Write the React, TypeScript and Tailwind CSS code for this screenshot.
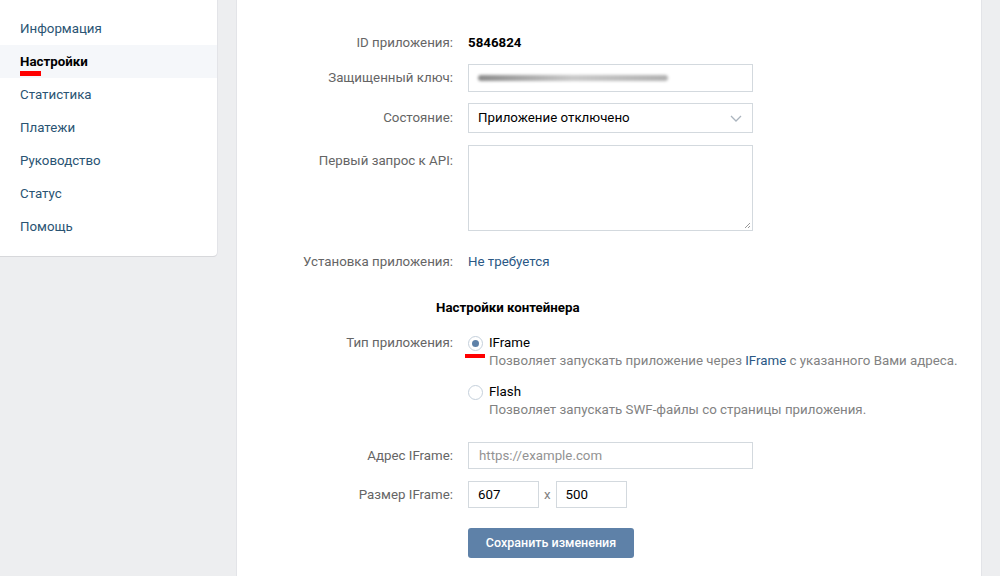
const menu = ['Информация', 'Настройки', 'Статистика', 'Платежи', 'Руководство', 'Статус', 'Помощь']

function Row({ label, children, top = false, pad = 7, className = '' }: { label: string; children: React.ReactNode; top?: boolean; pad?: number; className?: string }) {
  return (
    <div className={`flex ${top ? 'items-start' : 'items-center'} ${className}`}>
      <div className="w-[216px] text-right text-[#656565]" style={top ? { paddingTop: pad } : undefined}>{label}</div>
      <div className="ml-[15px] flex-1">{children}</div>
    </div>
  )
}

function Radio({ checked }: { checked?: boolean }) {
  return (
    <div className="w-[15px] h-[15px] rounded-full border border-[#c5d0db] bg-white flex items-center justify-center shrink-0">
      {checked && <div className="w-[7px] h-[7px] rounded-full bg-[#5e81a8]" />}
    </div>
  )
}

export default function App() {
  return (
    <div
      className="flex h-[576px] overflow-hidden bg-[#edeef0] text-[13.3px] leading-[18px]"
      style={{ fontFamily: 'Roboto, "Open Sans", Arial, sans-serif' }}
    >
      {/* sidebar */}
      <div className="w-[217px] self-start bg-white rounded-br-[4px] shadow-[0_1px_0_0_#d7d8db,0_0_0_1px_#e3e4e8] pt-[12px] pb-[13px]">
        {menu.map((m) => {
          const active = m === 'Настройки'
          return (
            <div
              key={m}
              className={`relative h-[33px] flex items-center px-[20px] ${active ? 'bg-[#f5f7fa] text-black font-bold' : 'text-[#2a5473]'}`}
            >
              {m}
              {active && <div className="absolute left-[20px] top-[26px] w-[21px] h-[5px] bg-[#ff0000]" />}
            </div>
          )
        })}
      </div>

      {/* main card */}
      <div className="ml-[20px] w-[744px] bg-white shadow-[0_0_0_1px_#e3e4e8] pt-[34px]">
        <Row label="ID приложения:">
          <span className="font-bold text-black">5846824</span>
        </Row>

        <Row label="Защищенный ключ:" className="mt-[12px]">
          <div className="w-[285px] h-[28px] border border-[#d3d9de] flex items-center px-[9px] overflow-hidden">
            <div className="w-[190px] h-[6px] rounded-full bg-gradient-to-r from-[#8a8a8a] via-[#c8c8c8] to-[#b0b0b0] blur-[1.5px]" />
          </div>
        </Row>

        <Row label="Состояние:" className="mt-[11px]">
          <div className="w-[285px] h-[30px] border border-[#d3d9de] flex items-center justify-between pl-[9px] pr-[10px] text-black">
            <span>Приложение отключено</span>
            <svg width="12" height="7" viewBox="0 0 12 7" fill="none">
              <path d="M1 1l5 5 5-5" stroke="#aab4be" strokeWidth="1.3" />
            </svg>
          </div>
        </Row>

        <Row label="Первый запрос к API:" top className="mt-[12px]">
          <div className="relative w-[285px] h-[86px] border border-[#d3d9de]">
            <svg className="absolute right-[1px] bottom-[1px]" width="7" height="7" viewBox="0 0 7 7">
              <path d="M6 1L1 6M6 4L4 6" stroke="#999" strokeWidth="1" />
            </svg>
          </div>
        </Row>

        <Row label="Установка приложения:" className="mt-[22px]">
          <span className="text-[#2a5885]">Не требуется</span>
        </Row>

        <div className="mt-[28px] pl-[199px] font-bold text-black">Настройки контейнера</div>

        <Row label="Тип приложения:" top pad={0} className="mt-[17px]">
          <div className="relative">
            <div className="flex items-center gap-[6px] h-[18px]">
              <Radio checked />
              <span className="text-black">IFrame</span>
            </div>
            <div className="absolute left-[-3px] top-[20px] w-[20px] h-[4px] bg-[#ff0000]" />
            <div className="pl-[21px] text-[#828282]">
              Позволяет запускать приложение через <span className="text-[#2a5885]">IFrame</span> с указанного Вами адреса.
            </div>
            <div className="flex items-center gap-[6px] h-[18px] mt-[13px]">
              <Radio />
              <span className="text-black">Flash</span>
            </div>
            <div className="pl-[21px] text-[#828282]">Позволяет запускать SWF-файлы со страницы приложения.</div>
          </div>
        </Row>

        <Row label="Адрес IFrame:" className="mt-[23px]">
          <div className="w-[285px] h-[27px] border border-[#d3d9de] flex items-center px-[10px] text-[#939393]">
            https://example.com
          </div>
        </Row>

        <Row label="Размер IFrame:" className="mt-[12px]">
          <div className="flex items-center">
            <div className="w-[71px] h-[27px] border border-[#d3d9de] flex items-center px-[9px] text-black">607</div>
            <span className="mx-[5px] text-[#828282]">x</span>
            <div className="w-[71px] h-[27px] border border-[#d3d9de] flex items-center px-[9px] text-black">500</div>
          </div>
        </Row>

        <Row label="" className="mt-[20px]">
          <button className="w-[166px] h-[30px] rounded-[3px] bg-[#5e81a8] text-white text-[12.5px] font-medium">
            Сохранить изменения
          </button>
        </Row>
      </div>
    </div>
  )
}
